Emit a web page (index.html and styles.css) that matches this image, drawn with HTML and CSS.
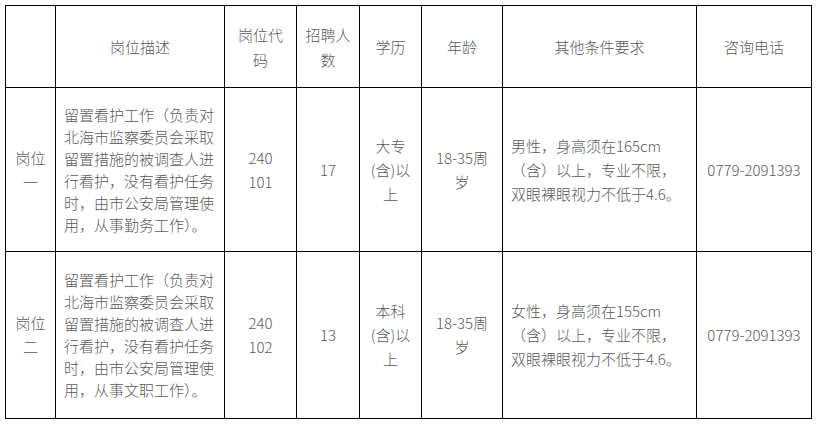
FILE: index.html
```html
<!DOCTYPE html>
<html lang="zh-CN">
<head>
<meta charset="utf-8">
<title>岗位表</title>
<link rel="stylesheet" href="styles.css">
</head>
<body>
<table class="jobs">
  <colgroup>
    <col class="c-name">
    <col class="c-desc">
    <col class="c-code">
    <col class="c-num">
    <col class="c-edu">
    <col class="c-age">
    <col class="c-req">
    <col class="c-tel">
  </colgroup>
  <tr class="head">
    <td></td>
    <td>岗位描述</td>
    <td>岗位代<br>码</td>
    <td>招聘人<br>数</td>
    <td>学历</td>
    <td>年龄</td>
    <td>其他条件要求</td>
    <td>咨询电话</td>
  </tr>
  <tr class="row1">
    <td>岗位<br>一</td>
    <td class="desc">留置看护工作（负责对<br>北海市监察委员会采取<br>留置措施的被调查人进<br>行看护，没有看护任务<br>时，由市公安局管理使<br>用，从事勤务工作）。</td>
    <td>240<br>101</td>
    <td>17</td>
    <td>大专<br>(含)以<br>上</td>
    <td>18-35周<br>岁</td>
    <td class="req">男性，身高须在165cm<br>（含）以上，专业不限，<br>双眼裸眼视力不低于4.6。</td>
    <td>0779-2091393</td>
  </tr>
  <tr class="row2">
    <td>岗位<br>二</td>
    <td class="desc">留置看护工作（负责对<br>北海市监察委员会采取<br>留置措施的被调查人进<br>行看护，没有看护任务<br>时，由市公安局管理使<br>用，从事文职工作）。</td>
    <td>240<br>102</td>
    <td>13</td>
    <td>本科<br>(含)以<br>上</td>
    <td>18-35周<br>岁</td>
    <td class="req">女性，身高须在155cm<br>（含）以上，专业不限，<br>双眼裸眼视力不低于4.6。</td>
    <td>0779-2091393</td>
  </tr>
</table>
</body>
</html>
```
FILE: styles.css
```css
html, body {
  background: #fff;
}
body {
  margin: 5px;
  font-family: "Noto Sans CJK SC", "Noto Sans", sans-serif;
  font-size: 15px;
  font-weight: 300;
  color: #5a5a5a;
}
.jobs {
  border-collapse: collapse;
  table-layout: fixed;
  width: 806px;
}
.c-name { width: 50px; }
.c-desc { width: 169px; }
.c-code { width: 72px; }
.c-num { width: 63px; }
.c-edu { width: 62px; }
.c-age { width: 81px; }
.c-req { width: 194px; }
.c-tel { width: 115px; }
.jobs td {
  border: 1px solid #000;
  padding: 0 4px;
  text-align: center;
  vertical-align: middle;
  line-height: 24px;
  white-space: nowrap;
}
.head { height: 82px; }
.head td { line-height: 25px; }
.row1 { height: 164px; }
.row2 { height: 167px; }
.jobs td.desc {
  text-align: left;
  line-height: 22px;
  padding-left: 8px;
}
.jobs td.req {
  text-align: left;
  padding-left: 8px;
}
```
